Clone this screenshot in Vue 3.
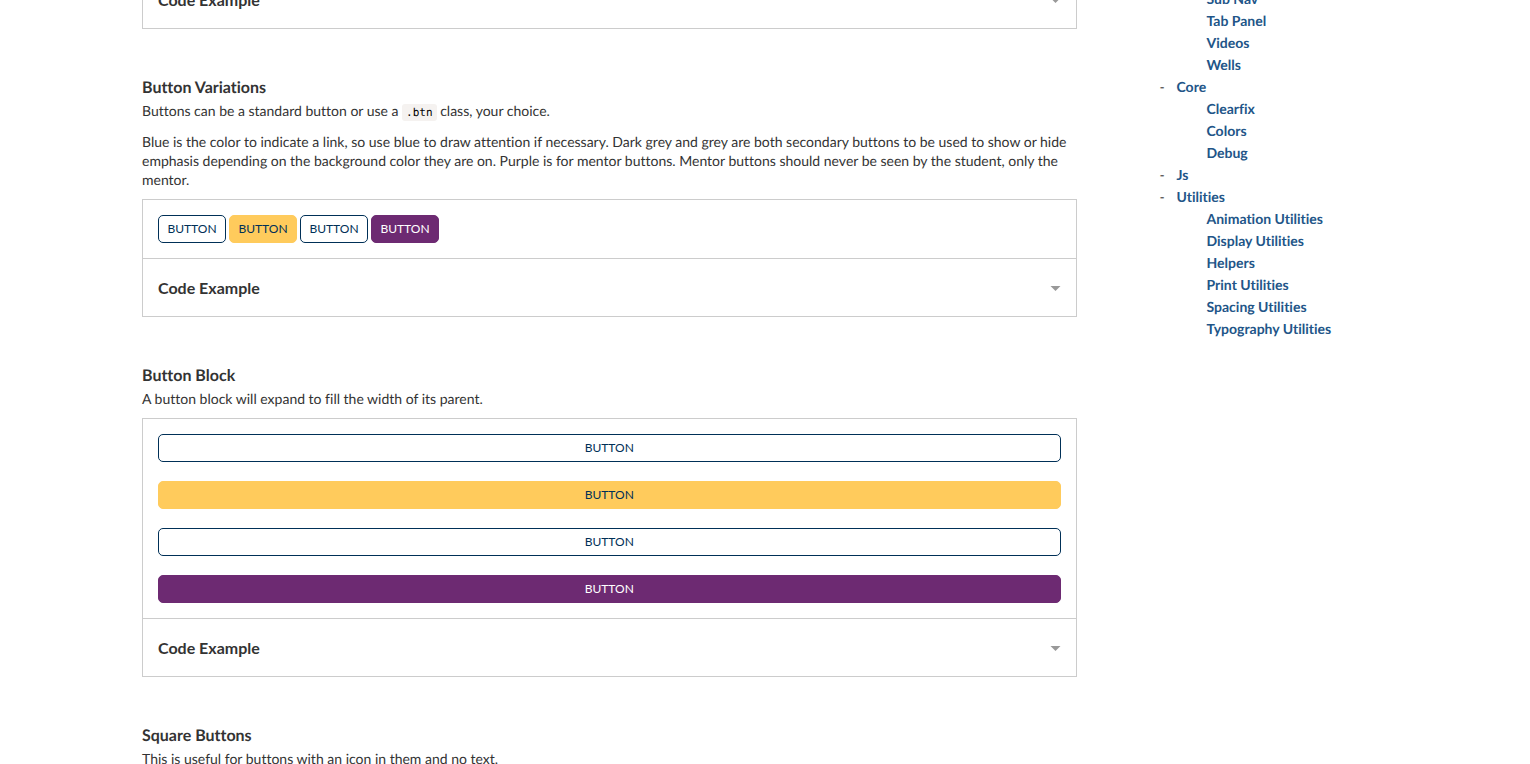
<script setup>
import { ref } from 'vue'

const variants = ['primary', 'accent', 'secondary', 'mentor']
const open = ref('')

const nav = [
  { title: '', children: ['Sub Nav', 'Tab Panel', 'Videos', 'Wells'] },
  { title: 'Core', children: ['Clearfix', 'Colors', 'Debug'] },
  { title: 'Js', children: [] },
  {
    title: 'Utilities',
    children: [
      'Animation Utilities',
      'Display Utilities',
      'Helpers',
      'Print Utilities',
      'Spacing Utilities',
      'Typography Utilities'
    ]
  }
]

const slug = (text) => '#' + text.toLowerCase().replace(/ /g, '-')
const toggle = (name) => {
  open.value = open.value === name ? '' : name
}
</script>

<template>
  <div class="page">
    <main class="content">
      <section class="section">
        <div class="panel">
          <button class="code-toggle" type="button" :aria-expanded="open === 'base'" @click="toggle('base')">
            Code Example
            <svg class="caret" viewBox="0 0 10 5" aria-hidden="true"><path d="M0 0h10L5 5z" /></svg>
          </button>
        </div>
      </section>

      <section class="section">
        <h2>Button Variations</h2>
        <p>Buttons can be a standard button or use a <code>.btn</code> class, your choice.</p>
        <p>
          Blue is the color to indicate a link, so use blue to draw attention if necessary. Dark grey and grey are both
          secondary buttons to be used to show or hide emphasis depending on the background color they are on. Purple is
          for mentor buttons. Mentor buttons should never be seen by the student, only the mentor.
        </p>
        <div class="panel">
          <div class="demo inline">
            <button v-for="v in variants" :key="v" type="button" class="btn" :class="v">BUTTON</button>
          </div>
          <button class="code-toggle" type="button" :aria-expanded="open === 'variations'" @click="toggle('variations')">
            Code Example
            <svg class="caret" viewBox="0 0 10 5" aria-hidden="true"><path d="M0 0h10L5 5z" /></svg>
          </button>
        </div>
      </section>

      <section class="section">
        <h2>Button Block</h2>
        <p>A button block will expand to fill the width of its parent.</p>
        <div class="panel">
          <div class="demo block">
            <button v-for="v in variants" :key="v" type="button" class="btn" :class="v">BUTTON</button>
          </div>
          <button class="code-toggle" type="button" :aria-expanded="open === 'block'" @click="toggle('block')">
            Code Example
            <svg class="caret" viewBox="0 0 10 5" aria-hidden="true"><path d="M0 0h10L5 5z" /></svg>
          </button>
        </div>
      </section>

      <section class="section">
        <h2>Square Buttons</h2>
        <p>This is useful for buttons with an icon in them and no text.</p>
      </section>
    </main>

    <nav class="sidebar" aria-label="Style guide">
      <ul class="groups">
        <li v-for="group in nav" :key="group.title">
          <a v-if="group.title" class="group-link" :href="slug(group.title)">{{ group.title }}</a>
          <ul v-if="group.children.length" class="children">
            <li v-for="child in group.children" :key="child">
              <a :href="slug(child)">{{ child }}</a>
            </li>
          </ul>
        </li>
      </ul>
    </nav>
  </div>
</template>

<style>
body {
  margin: 0;
  background: #fff;
}
</style>

<style scoped>
.page {
  display: flex;
  align-items: flex-start;
  box-sizing: border-box;
  height: 100vh;
  padding: 0 142px;
  overflow: hidden;
  color: #333;
  font: 14px/19px Lato, "Liberation Sans", sans-serif;
  font-variant-ligatures: none;
  text-rendering: geometricPrecision;
}

.content {
  flex: 3 1 0;
  min-width: 0;
  margin-top: -30px;
}

.section {
  margin-bottom: 48px;
}

h2 {
  margin: 0 0 2px;
  font-size: 16px;
  line-height: 22px;
  font-weight: 700;
}

p {
  margin: 0 0 10px;
}

p + p {
  margin-top: 12px;
}

code {
  padding: 2px 4px;
  border-radius: 3px;
  background: #f5f2f0;
  color: #000;
  font: 11px/11px "DejaVu Sans Mono", monospace;
}

.panel {
  border: 1px solid #ccc;
}

.demo {
  display: flex;
  padding: 15px;
  border-bottom: 1px solid #ccc;
}

.inline {
  gap: 3px;
}

.block {
  flex-direction: column;
  gap: 19px;
}

.btn {
  min-width: 68px;
  height: 28px;
  padding: 0 8px;
  border: 1px solid #003057;
  border-radius: 5px;
  background: #fff;
  color: #003057;
  font: 12px/26px Lato, "Liberation Sans", sans-serif;
  cursor: pointer;
}

.btn.accent {
  border-color: #ffcb5c;
  background: #ffcb5c;
}

.btn.mentor {
  border-color: #6d2a72;
  background: #6d2a72;
  color: #fff;
}

.code-toggle {
  display: flex;
  align-items: center;
  justify-content: space-between;
  width: 100%;
  height: 57px;
  padding: 0 15px;
  border: 0;
  background: none;
  color: #333;
  font: 700 16px/22px Lato, "Liberation Sans", sans-serif;
  cursor: pointer;
}

.caret {
  width: 11px;
  height: 5px;
  margin-top: 2px;
  fill: #999;
}

.sidebar {
  flex: 1 1 0;
  min-width: 0;
  margin-top: -12px;
  line-height: 22px;
}

ul {
  margin: 0;
  padding: 0;
  list-style: none;
}

.groups {
  padding-left: 100px;
}

.children {
  padding-left: 30px;
}

.group-link::before {
  content: "-";
  display: inline-block;
  width: 17px;
  margin-left: -17px;
  color: #333;
  font-weight: 400;
}

a {
  color: #225588;
  font-weight: 700;
  text-decoration: none;
}
</style>
